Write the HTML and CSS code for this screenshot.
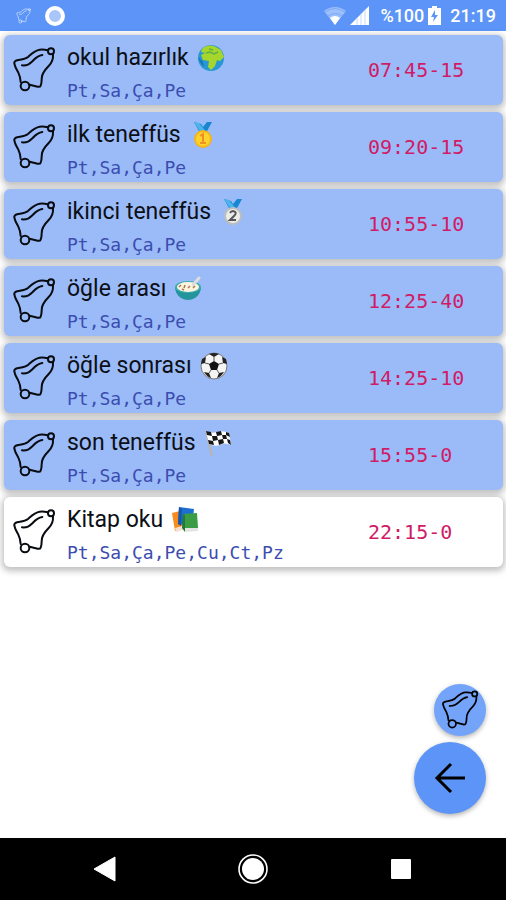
FILE: index.html
```html
<!DOCTYPE html>
<html lang="tr">
  <head>
    <meta charset="UTF-8" />
    <meta name="viewport" content="width=device-width, initial-scale=1.0" />
    <title>Alarmlar</title>
    <link rel="stylesheet" href="styles.css">
  </head>
  <body>
    <!-- shared icons -->
    <svg class="sprite" aria-hidden="true">
      <symbol id="bell" viewBox="12 14 132 138">
        <g fill="none" stroke="currentColor" stroke-width="6" stroke-linecap="round" stroke-linejoin="round">
          <path d="M119 24C112 22 104 21 95 22C80 24 71 34 60 44C48 54 32 51 22 56C19 58 18 62 20 67C22 76 27 83 31 91C35 99 37 108 38 119" />
          <path d="M135 36C136 50 133 60 122 71C108 85 100 96 101 111C101 119 100 125 98 130Q96 135 89 133L65 127" />
          <path d="M42 69C58 70 64 66 74 56C84 45 90 40 103 38" />
          <circle cx="51" cy="131" r="13" />
          <circle cx="129" cy="27" r="9" />
        </g>
      </symbol>
    </svg>

    <header class="status-bar">
      <svg class="status-bell" width="15" height="16"><use href="#bell" /></svg>
      <svg width="20" height="20" viewBox="0 0 20 20">
        <circle cx="10" cy="10" r="8" fill="#a9c6fb" stroke="#fff" stroke-width="4" />
      </svg>
      <div class="status-right">
        <svg width="22" height="18" viewBox="0 0 22 18">
          <path d="M0 4Q11-4 22 4L11 18Z" fill="#fff" opacity=".4" />
          <path d="M1 5Q11-2 21 5M4 9Q11 4 18 9" fill="none" stroke="#5c94f8" opacity=".5" />
          <path d="M6 11Q11 7 16 11L11 18Z" fill="#fff" />
        </svg>
        <svg width="20" height="19" viewBox="0 0 20 19">
          <path d="M0 19L19 0V19Z" fill="#fff" />
          <path d="M7 12V19M11 8V19M15 4V19" stroke="#c5d9fd" />
        </svg>
        <span class="battery-text">%100</span>
        <svg class="battery" width="13" height="19" viewBox="0 0 13 19">
          <path d="M4 0H9V2H13V19H0V2H4Z" fill="#fff" />
          <path d="M7 4L3 11H6L5 16L10 9H7Z" fill="#5c94f8" />
        </svg>
        <span>21:19</span>
      </div>
    </header>

    <main class="screen">
      <ul class="alarm-list">
        <li class="alarm">
          <svg class="alarm-bell"><use href="#bell" /></svg>
          <div class="alarm-info">
            <h2>okul hazırlık
              <svg class="emoji" viewBox="0 0 28 28">
                <circle cx="14" cy="14" r="13" fill="#2898d4" />
                <path d="M5 5Q10 0 17 2L24 6L27 13L23 17L20 16L18 22L14 26L11 23L12 17L6 16L4 11L8 9L4 8Z" fill="#a6d52b" />
                <path d="M9 9L13 8L17 10L21 8M12 5L16 6" fill="none" stroke="#5cb04a" stroke-width="1.4" />
                <path d="M1 13L3 18L7 23L6 18Z" fill="#1975b9" />
              </svg>
            </h2>
            <p class="days">Pt,Sa,Ça,Pe</p>
          </div>
          <time class="time">07:45-15</time>
        </li>
        <li class="alarm">
          <svg class="alarm-bell"><use href="#bell" /></svg>
          <div class="alarm-info">
            <h2>ilk teneffüs
              <svg class="emoji" viewBox="0 0 28 28">
                <path d="M5 1L12 3L14 6L18 1H23L17 12H11Z" fill="#1687d0" />
                <path d="M5 1L10 2L18 12H12Z" fill="#4eb3ec" />
                <circle cx="14" cy="18" r="9" fill="#f4b51c" />
                <circle cx="14" cy="18" r="7" fill="#ffd32e" />
                <path d="M11 15L14 13V22M11 22H17" fill="none" stroke="#ee9222" stroke-width="2" />
              </svg>
            </h2>
            <p class="days">Pt,Sa,Ça,Pe</p>
          </div>
          <time class="time">09:20-15</time>
        </li>
        <li class="alarm">
          <svg class="alarm-bell"><use href="#bell" /></svg>
          <div class="alarm-info">
            <h2>ikinci teneffüs
              <svg class="emoji" viewBox="0 0 28 28">
                <path d="M5 1L12 3L14 6L18 1H23L17 12H11Z" fill="#1687d0" />
                <path d="M5 1L10 2L18 12H12Z" fill="#4eb3ec" />
                <circle cx="14" cy="18" r="9" fill="#bdbdbd" />
                <circle cx="14" cy="18" r="7" fill="#ececec" />
                <path d="M11 15Q12 13 14 13Q19 14 15 18L11 22H17" fill="none" stroke="#555" stroke-width="2" />
              </svg>
            </h2>
            <p class="days">Pt,Sa,Ça,Pe</p>
          </div>
          <time class="time">10:55-10</time>
        </li>
        <li class="alarm">
          <svg class="alarm-bell"><use href="#bell" /></svg>
          <div class="alarm-info">
            <h2>öğle arası
              <svg class="emoji" viewBox="0 0 28 28">
                <path d="M1 12Q1 19 7 23Q14 27 21 23Q27 19 27 12Z" fill="#23949c" />
                <ellipse cx="14" cy="12" rx="13" ry="6" fill="#3cacb2" />
                <ellipse cx="14" cy="12" rx="11" ry="5" fill="#fff5df" />
                <path d="M19 10L25 3" stroke="#ddd" stroke-width="3" stroke-linecap="round" />
                <path d="M5 12L7 10M10 13L11 10M14 13L16 11M19 13L21 11M8 14L10 15" stroke="#a97952" stroke-width="1.5" />
              </svg>
            </h2>
            <p class="days">Pt,Sa,Ça,Pe</p>
          </div>
          <time class="time">12:25-40</time>
        </li>
        <li class="alarm">
          <svg class="alarm-bell"><use href="#bell" /></svg>
          <div class="alarm-info">
            <h2>öğle sonrası
              <svg class="emoji" viewBox="0 0 28 28">
                <circle cx="14" cy="14" r="13" fill="#f4f4f4" stroke="#777" />
                <path d="M14 9L19 12L17 18H11L9 12Z" fill="#111" />
                <path d="M9 2Q14 0 19 2L14 5ZM1 12L2 7L6 5L5 11ZM27 12L26 7L22 5L23 11ZM4 20L9 21L11 26Q7 25 4 20ZM24 20L19 21L17 26Q21 25 24 20Z" fill="#222" />
                <path d="M14 9V5M19 12L23 11M17 18L19 21M11 18L9 21M9 12L5 11" stroke="#555" />
              </svg>
            </h2>
            <p class="days">Pt,Sa,Ça,Pe</p>
          </div>
          <time class="time">14:25-10</time>
        </li>
        <li class="alarm">
          <svg class="alarm-bell"><use href="#bell" /></svg>
          <div class="alarm-info">
            <h2>son teneffüs
              <svg class="emoji" viewBox="0 0 28 28">
                <path d="M2 2L8 27" stroke="#b9b3aa" stroke-width="2" />
                <path d="M2 2Q8 5 13 3Q18 1 25 4L27 16Q20 13 16 16Q11 18 5 15Z" fill="#fff" />
                <path d="M2 2L7 3L8 7L3 6ZM12 3L17 2L18 6L13 7ZM22 3L25 4L26 8L22 6ZM8 7L13 7L14 11L9 12ZM18 6L22 6L23 10L19 10ZM4 11L9 12L10 16L5 15ZM14 11L19 10L20 14L15 16ZM23 10L26 11L27 16L24 14Z" fill="#171717" />
              </svg>
            </h2>
            <p class="days">Pt,Sa,Ça,Pe</p>
          </div>
          <time class="time">15:55-0</time>
        </li>
        <li class="alarm alarm-off">
          <svg class="alarm-bell"><use href="#bell" /></svg>
          <div class="alarm-info">
            <h2>Kitap oku
              <svg class="emoji" viewBox="0 0 28 28">
                <path d="M1 7L9 5L12 23L4 25Z" fill="#f78b1e" />
                <path d="M4 22L11 20L12 24L5 26Z" fill="#f3ded0" />
                <path d="M8 1L23 3L21 20L7 18Z" fill="#1c6fd0" />
                <path d="M8 1L7 18L10 20L11 3Z" fill="#1557a8" />
                <path d="M12 8L26 7L27 22L12 23Z" fill="#3a9c43" />
                <path d="M12 22L27 22V25L14 26Z" fill="#e4e4e4" />
                <path d="M12 8L11 22L14 26V9Z" fill="#237a31" />
              </svg>
            </h2>
            <p class="days">Pt,Sa,Ça,Pe,Cu,Ct,Pz</p>
          </div>
          <time class="time">22:15-0</time>
        </li>
      </ul>

      <!-- floating buttons over the list -->
      <div class="fabs">
        <button class="fab fab-small" aria-label="Alarm ekle">
          <svg width="38" height="40"><use href="#bell" /></svg>
        </button>
        <button class="fab" aria-label="Geri">
          <svg width="32" height="32" viewBox="0 0 32 32">
            <path d="M31 16H4M17 2L3 16L17 30" fill="none" stroke="#000" stroke-width="3" />
          </svg>
        </button>
      </div>
    </main>

    <nav class="nav-bar">
      <button aria-label="Geri">
        <svg width="24" height="26" viewBox="0 0 24 26"><path d="M1 13L22 1V25Z" fill="#fff" stroke="#fff" stroke-linejoin="round" /></svg>
      </button>
      <button aria-label="Ana ekran">
        <svg width="30" height="30" viewBox="0 0 30 30">
          <circle cx="15" cy="15" r="14" fill="none" stroke="#fff" stroke-width="1.6" />
          <circle cx="15" cy="15" r="11" fill="#fff" />
        </svg>
      </button>
      <button aria-label="Son uygulamalar">
        <svg width="22" height="22" viewBox="0 0 22 22"><rect x="1" y="1" width="20" height="20" rx="1" fill="#fff" /></svg>
      </button>
    </nav>
  </body>
</html>
```
FILE: styles.css
```css
* {
  box-sizing: border-box;
}

body {
  margin: 0;
  min-height: 100vh;
  display: flex;
  flex-direction: column;
  background: #fff;
  color: #0c0f16;
  font-family: Roboto, sans-serif;
}

svg {
  display: block;
}

button {
  padding: 0;
  border: 0;
  background: none;
  color: #000;
  cursor: pointer;
}

.sprite {
  position: absolute;
  width: 0;
  height: 0;
}

.status-bar {
  display: flex;
  align-items: center;
  gap: 14px;
  height: 31px;
  padding: 0 10px 0 16px;
  background: #5c94f8;
  color: #fff;
  font-size: 18px;
  font-weight: 500;
}

.status-bell {
  color: #e4eeff;
}

.status-right {
  display: flex;
  align-items: center;
  gap: 4px;
  margin-left: auto;
}

.battery-text {
  margin-left: 6px;
}

.battery {
  margin-right: 5px;
}

.screen {
  position: relative;
  flex: 1;
}

.alarm-list {
  display: flex;
  flex-direction: column;
  gap: 7px;
  margin: 0;
  padding: 4px 3px 8px 4px;
  list-style: none;
}

.alarm {
  display: flex;
  align-items: center;
  height: 70px;
  padding-left: 8px;
  border-radius: 6px;
  background: #9abbf8;
  box-shadow: 0 2px 6px 2px rgba(0, 0, 0, 0.25);
}

.alarm-off {
  background: #fff;
}

.alarm-bell {
  width: 44px;
  height: 46px;
  color: #080b10;
}

.alarm-info {
  flex: 1;
  padding: 10px 0 0 11px;
}

.alarm h2 {
  display: flex;
  align-items: center;
  gap: 8px;
  margin: 0;
  font-size: 23px;
  font-weight: 400;
  line-height: 32px;
}

.emoji {
  width: 28px;
  height: 28px;
}

.days {
  margin: 0;
  color: #3c4db0;
  font-family: "DejaVu Sans Mono", monospace;
  font-size: 18px;
  line-height: 34px;
}

.time {
  width: 135px;
  color: #d01c66;
  font-family: "DejaVu Sans Mono", monospace;
  font-size: 20px;
}

.fabs {
  position: absolute;
  right: 20px;
  bottom: 24px;
  display: flex;
  flex-direction: column;
  align-items: flex-end;
  gap: 6px;
}

.fab {
  display: flex;
  align-items: center;
  justify-content: center;
  width: 72px;
  height: 72px;
  border-radius: 50%;
  background: #5c94f8;
  box-shadow: 0 2px 5px rgba(0, 0, 0, 0.3);
}

.fab-small {
  width: 52px;
  height: 52px;
  background: #73a4fa;
}

.nav-bar {
  display: flex;
  height: 62px;
  padding: 0 31px;
  background: #000;
}

.nav-bar button {
  flex: 1;
  display: flex;
  align-items: center;
  justify-content: center;
}
```
